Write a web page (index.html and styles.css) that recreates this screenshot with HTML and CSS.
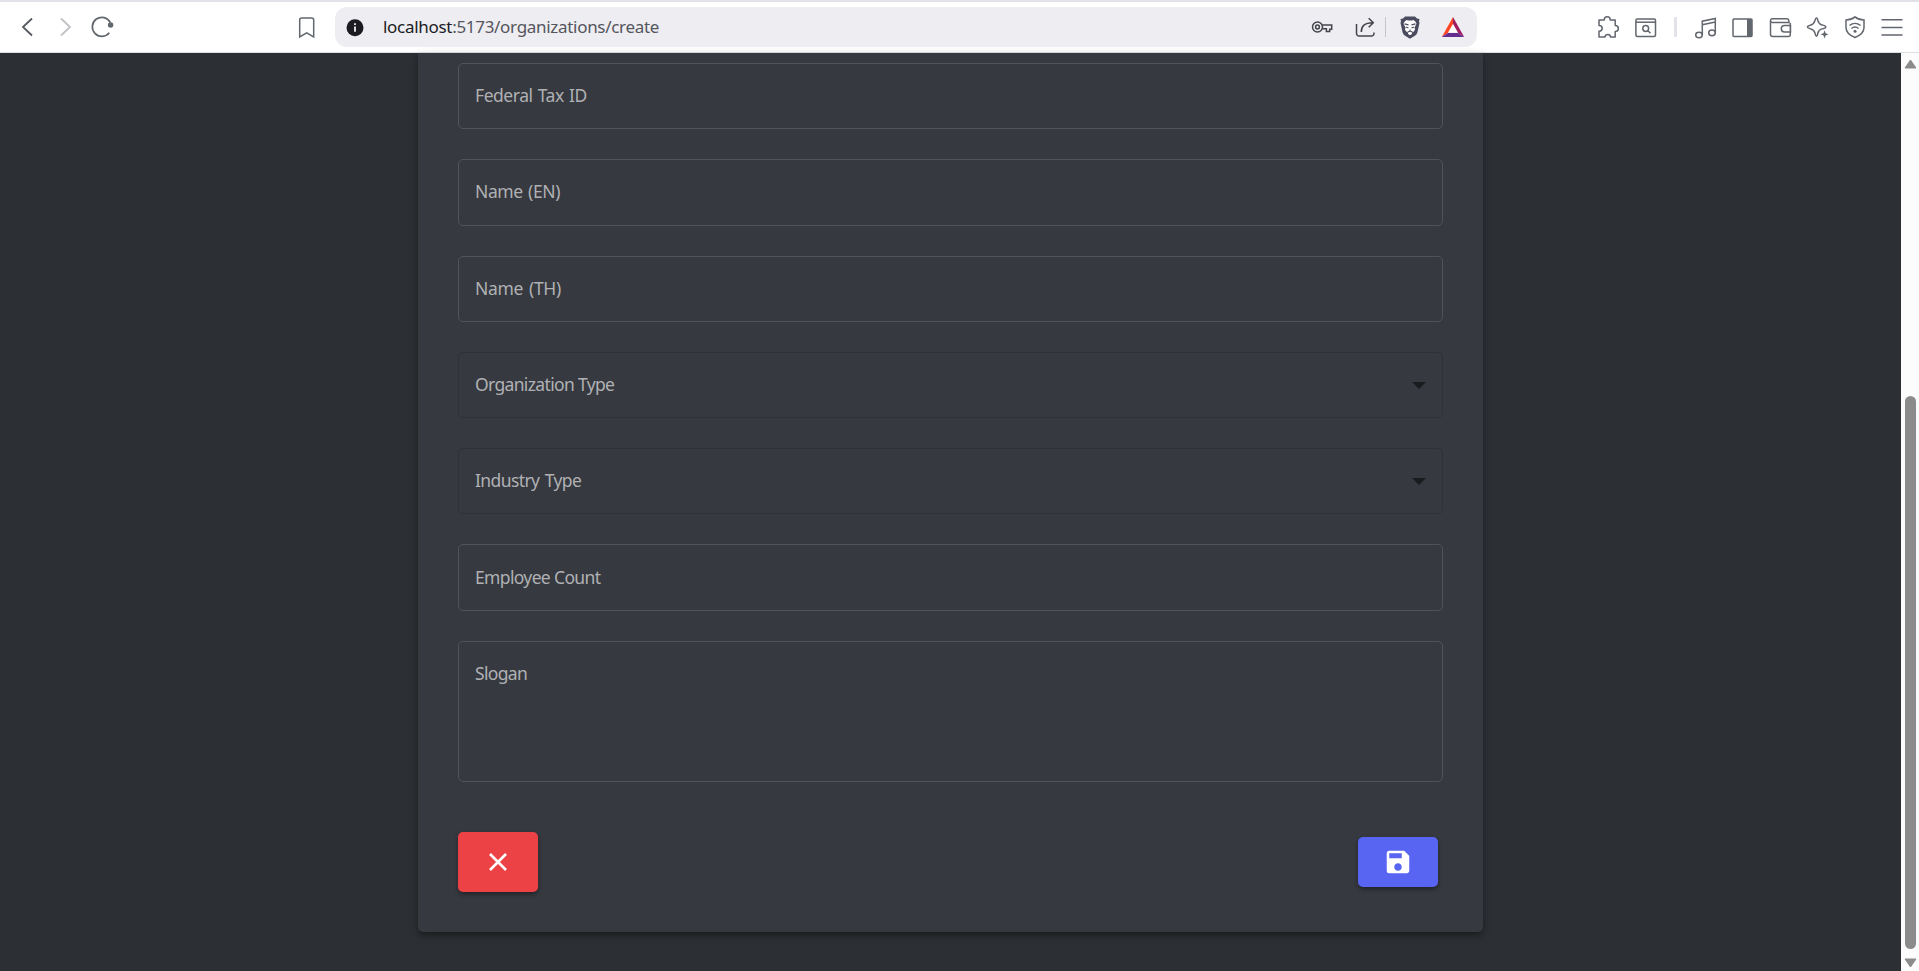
FILE: index.html
```html
<!DOCTYPE html>
<html lang="en">
<head>
<meta charset="utf-8">
<title>Create organization</title>
<link rel="stylesheet" href="styles.css">
</head>
<body>
<header class="toolbar">
  <svg class="icon back" viewBox="0 0 24 24"><path d="M17 3.500 8 12l9 8.500"/></svg>
  <svg class="icon forward" viewBox="0 0 24 24"><path d="M8 3.500 17 12l-9 8.500"/></svg>
  <svg class="icon reload" viewBox="0 0 24 24"><path d="M19.300 17.700A9.500 9.500 0 1 1 20.300 7.500"/><circle class="solid" cx="20.600" cy="10" r="2.700"/></svg>
  <svg class="icon bookmark" viewBox="0 0 24 24"><path d="M4.700 22V5.100a2 2 0 0 1 2-2h10a2 2 0 0 1 2 2V22l-7-4.200z"/></svg>
  <div class="address">
    <svg class="icon info" viewBox="0 0 24 24"><circle cx="12" cy="12.800" r="8.500" fill="#1c1b22" stroke="none"/><path d="M12 8.300v1.800M12 11.500v5.200" stroke="#ededf2" stroke-width="1.800"/></svg>
    <div class="url"><span class="host">localhost</span>:5173/organizations/create</div>
    <svg class="icon key" viewBox="0 0 24 24"><circle cx="6.500" cy="12" r="5"/><circle cx="6.500" cy="12" r="1.900"/><path d="M11.200 10h9.500v4.200h-2v2.200h-3.300v-2.700h-4.200"/></svg>
    <svg class="icon share" viewBox="0 0 24 24"><path d="M2.500 9v9.500a2.500 2.500 0 0 0 2.500 2.500h12.500a2.500 2.500 0 0 0 2.500-2.500v-1M7.300 17c0-5.800 3-9.300 11.700-9.300M14.700 3.200l4.600 4.500-4.600 4.500"/></svg>
    <span class="rule"></span>
    <svg class="icon lion" viewBox="0 0 24 24"><path d="m7 1.500-2 2-2.500.5L3 6.200 2.500 8l2 9c.5 2 1.500 3 3 4l4.500 2.700L16.500 21c1.500-1 2.500-2 3-4l2-9-.5-1.800.5-2.200L19 3.500l-2-2z" fill="#4b4b5f" stroke="none"/><path d="M8.500 5 6.500 6.800 5.500 8.800l2 3.700-.5 2.300 1.500 2 1.300.4.300 1.800 1.900 1.300 1.900-1.300.3-1.800 1.300-.4 1.500-2-.5-2.300 2-3.700-1-2L15.500 5l-1.500.5h-4z" fill="#fff" stroke="none"/><path d="m6.500 8.800 4 1M17.500 8.800l-4 1M12 14.500v1.800M9.500 17.200l2.500-1.200 2.500 1.200M8 12l2.500 1M16 12l-2.500 1" stroke="#4b4b5f" stroke-width="1.200"/></svg>
    <svg class="icon bat" viewBox="0 0 24 24"><g stroke="none"><path d="M12 2v7l-4.700 8.700L.8 22z" fill="#ff4724"/><path d="M12 2v7l4.700 8.700 6.500 4.300z" fill="#9e1f63"/><path d="M.8 22l6.500-4.300h9.400l6.500 4.300z" fill="#662d91"/><path d="m12 9.200 5 8.600H7z" fill="#fff"/></g></svg>
  </div>
  <svg class="icon puzzle" viewBox="0 0 24 24"><path d="M3 5h5.200c0-4.200 6-4.200 6 0h5v5.500c4.200 0 4.200 6 0 6V22h-4.700c0-3.500-5.500-3.500-5.500 0H3v-5.800c4.300 0 4.300-5.700 0-5.700z" stroke-linejoin="round"/></svg>
  <svg class="icon find" viewBox="0 0 24 24"><rect x="1.900" y="3.900" width="19.600" height="17.600" rx="1.500"/><path d="M2 7.200h19.500"/><circle cx="11.700" cy="13.500" r="2.900"/><path d="m14 15.800 2.500 2.500"/></svg>
  <span class="divider"></span>
  <svg class="icon music" viewBox="0 0 24 24"><ellipse cx="5" cy="20" rx="3.300" ry="2.700"/><ellipse cx="18" cy="17.800" rx="3.300" ry="2.900"/><path d="M8.300 20V6.200l13-2.800v14.400M8.300 9.800l13-2.700"/></svg>
  <svg class="icon panel" viewBox="0 0 24 24"><rect x="2" y="3.900" width="19" height="17.600" rx="1"/><path d="M16 4h5v17.500h-5z" class="solid"/></svg>
  <svg class="icon wallet" viewBox="0 0 24 24"><path d="M20.800 7.500H3.500a2 2 0 0 1-2-2 2 2 0 0 1 2-1.800h14.300a2 2 0 0 1 2 2v1.800M1.500 5.500v13.700a2.300 2.300 0 0 0 2.300 2.300h15.500a2 2 0 0 0 2-2V8M21.500 10.500h-6a3.200 3.200 0 0 0 0 6.400h6z"/></svg>
  <svg class="icon sparkle" viewBox="0 0 24 24"><path d="M10.500 3c.9 0 1 1.100 1.300 2.400.6 2.500 1.700 3.900 4.100 4.500 1.300.4 3.900.6 3.900 2.100s-2.600 1.500-3.900 1.900c-2.400.7-3.500 1.900-4.100 4.300-.3 1.300-.4 3-1.300 3s-1.200-1.700-1.500-3c-.6-2.400-1.600-3.700-4-4.300C3.400 13.400 1.400 13 1.400 12s2-1.600 3.600-2.100c2.400-.6 3.400-2.100 4-4.500.3-1.300.6-2.400 1.500-2.400z"/><path d="m18.600 15.200 1 3 3 1.100-3 1.100-1 3-1.100-3-3-1.100 3-1.100z" class="solid"/></svg>
  <svg class="icon shield" viewBox="0 0 24 24"><path d="M12 1.900C9.500 4 6 5 3 5.100v7.400c0 4.500 4 8 9 10 5-2 9-5.500 9-10V5.100C18 5 14.500 4 12 1.900zM6.500 10.500c3.300-2.800 7.700-2.800 11 0M8.500 13.500c2-1.700 5-1.700 7 0"/><circle cx="12" cy="16.200" r="1.500" class="solid"/></svg>
  <svg class="icon menu" viewBox="0 0 24 24"><path d="M1.500 4.700h21M1.500 12.500h21M1.500 20h21"/></svg>
</header>
<div class="viewport">
  <main class="page">
    <form class="card">
      <div class="fields">
        <label class="field tax">Federal Tax ID</label>
        <label class="field name-en">Name (EN)</label>
        <label class="field name-th">Name (TH)</label>
        <label class="field select">Organization Type <svg class="caret" viewBox="0 0 14 7"><path d="M0 0h14L7 7z"/></svg></label>
        <label class="field select industry">Industry Type <svg class="caret" viewBox="0 0 14 7"><path d="M0 0h14L7 7z"/></svg></label>
        <label class="field">Employee Count</label>
        <label class="field area">Slogan</label>
      </div>
      <div class="actions">
        <button class="btn cancel" type="button" aria-label="Cancel"><svg viewBox="0 0 30 30"><path d="m7 7 16 16M23 7 7 23" fill="none" stroke="#fff" stroke-width="2.600"/></svg></button>
        <button class="btn save" type="button" aria-label="Save"><svg viewBox="0 0 24 24"><path fill="#fff" d="M17 3H5a2 2 0 0 0-2 2v14a2 2 0 0 0 2 2h14c1.100 0 2-.9 2-2V7zm-5 16c-1.660 0-3-1.340-3-3s1.340-3 3-3 3 1.340 3 3-1.340 3-3 3zm3-10H5V5h10z"/></svg></button>
      </div>
    </form>
  </main>
  <div class="scrollbar">
    <svg class="arrow" viewBox="0 0 13 10"><path d="M6.500 1 12 9H1z"/></svg>
    <span class="thumb"></span>
    <svg class="arrow" viewBox="0 0 13 10"><path d="M1 1h11L6.500 9z"/></svg>
  </div>
</div>
</body>
</html>
```
FILE: styles.css
```css
* { box-sizing: border-box; }
body { margin: 0; height: 971px; overflow: hidden; display: flex; flex-direction: column; background: #2c2f33; font-family: "Noto Sans", sans-serif; }

.toolbar { height: 53px; flex: none; display: flex; align-items: center; background: #fff; border-top: 2px solid #e3e2e9; border-bottom: 1px solid #dedfe3; }
.icon { width: 24px; height: 24px; flex: none; fill: none; stroke: #62666d; stroke-width: 1.500; }
.solid { fill: #62666d; stroke: none; }
.toolbar > .icon { margin-left: 13px; }
.toolbar > .back { margin-left: 15px; stroke: #565960; stroke-width: 1.800; }
.toolbar > .forward { margin-left: 14px; stroke: #c0c2c6; stroke-width: 1.800; }
.toolbar > .reload { stroke-width: 1.700; }
.toolbar > .bookmark { margin-left: 181px; }
.address { width: 1142px; height: 40px; margin-left: 16px; padding: 0 12px 0 8px; flex: none; display: flex; align-items: center; background: #ededf2; border-radius: 12px; }
.address .icon { stroke: #45464c; }
.url { flex: 1; margin-left: 16px; font-size: 17px; line-height: 24px; letter-spacing: -0.300px; color: #55555c; white-space: nowrap; }
.host { color: #1c1b22; }
.share { margin-left: 19px; }
.rule { width: 1px; height: 20px; margin-left: 7px; background: #c4c4cb; }
.lion { margin-left: 12px; }
.bat { margin-left: 19px; }
.toolbar > .puzzle { margin-left: 119px; }
.toolbar > .find { margin-left: 14px; }
.divider { width: 3px; height: 20px; margin-left: 16px; background: #e3e2e9; border-radius: 1px; }
.toolbar > .music { margin-left: 17px; }
.toolbar > .wallet { margin-left: 14px; }

.viewport { flex: 1; min-height: 0; display: flex; }
.page { flex: 1; display: flex; justify-content: center; align-items: flex-start; }
.card { width: 1065px; height: 879px; padding: 10px 40px 40px; background: #36393f; border-radius: 0 0 5px 5px; box-shadow: 0 4px 5px -2px rgba(0,0,0,.3), 0 3px 10px rgba(0,0,0,.24); }
.fields { display: flex; flex-direction: column; gap: 30px; }
.field { height: 66.300px; padding: 0 16px 2px; display: flex; align-items: center; justify-content: space-between; border: 1px solid #4f545c; border-radius: 5px; color: #b0b1b4; font-size: 17.500px; line-height: 26px; letter-spacing: -0.650px; white-space: nowrap; }
.tax { letter-spacing: -0.450px; word-spacing: 1px; }
.name-en { letter-spacing: -0.400px; word-spacing: 1.200px; }
.name-th { letter-spacing: -0.350px; word-spacing: 1.900px; }
.industry { letter-spacing: -0.600px; word-spacing: 1.300px; }
.select { border-color: #2f3136; }
.area { height: 141px; padding-top: 18px; align-items: flex-start; }
.caret { width: 14px; height: 7px; margin-top: 2px; fill: #1a1b1e; }
.actions { display: flex; justify-content: space-between; align-items: center; margin-top: 50px; padding-right: 5px; }
.btn { width: 80px; height: 50px; padding: 0; border: 0; border-radius: 5px; display: grid; place-items: center; box-shadow: 0 3px 4px -1px rgba(0,0,0,.25), 0 2px 5px rgba(0,0,0,.2); }
.cancel { height: 60px; background: #ed4245; }
.save { background: #5865f2; }
.btn svg { width: 30px; height: 30px; }

.scrollbar { width: 18px; flex: none; display: flex; flex-direction: column; align-items: center; padding: 6px 0 3px 1px; background: #fcfcfc; }
.arrow { width: 13px; height: 10px; flex: none; fill: #8b8b8b; stroke: #8b8b8b; stroke-width: 1; stroke-linejoin: round; }
.thumb { width: 11px; height: 553px; margin: 327px 0 9px; border-radius: 6px; background: #8b8b8b; }
```
